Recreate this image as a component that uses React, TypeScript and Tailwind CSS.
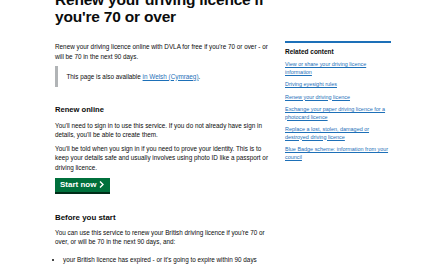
import React from "react";

const links = [
  "View or share your driving licence information",
  "Driving eyesight rules",
  "Renew your driving licence",
  "Exchange your paper driving licence for a photocard licence",
  "Replace a lost, stolen, damaged or destroyed driving licence",
  "Blue Badge scheme: information from your council",
];

export default function App() {
  return (
    <div className="h-[264px] w-[440px] overflow-hidden bg-white text-[#0b0c0c] font-['Liberation_Sans',Arial,sans-serif]">
      <div className="-mt-[9px] pl-[55px]">
        <h1 className="w-[230px] text-[15.5px] font-bold leading-[17px] tracking-[-0.2px]">
          Renew your driving licence if you're 70 or over
        </h1>
        <div className="flex gap-[14px]">
          <main className="w-[216px] text-[6.35px] leading-[9.6px]">
            <p className="mt-[17px] leading-[10px]">
              Renew your driving licence online with DVLA for free if you're 70 or over - or will be 70 in the next 90 days.
            </p>
            <div className="mt-[4px] border-l-[3.3px] border-[#b1b4b6] py-[5.5px] pl-[8.4px]">
              This page is also available{" "}
              <a href="#" className="text-[#1d70b8] underline underline-offset-1">
                in Welsh (Cymraeg)
              </a>
              .
            </div>
            <h2 className="mt-[18px] text-[7.6px] font-bold leading-[10px]">Renew online</h2>
            <p className="mt-[6px]">
              You'll need to sign in to use this service. If you do not already have sign in details, you'll be able to create them.
            </p>
            <p className="mt-[4px]">
              You'll be told when you sign in if you need to prove your identity. This is to keep your details safe and usually involves using photo ID like a passport or driving licence.
            </p>
            <button className="mt-[5px] flex h-[14px] w-[55px] items-center gap-[3px] bg-[#00703c] pl-[5px] text-[8px] font-bold text-white shadow-[0_2px_0_#002d18]">
              Start now
              <svg width="5" height="7" viewBox="0 0 5 7">
                <path d="M1 0.5 L4 3.5 L1 6.5" fill="none" stroke="white" strokeWidth="1.4" />
              </svg>
            </button>
            <h2 className="mt-[21px] text-[7.9px] font-bold leading-[10px]">Before you start</h2>
            <p className="mt-[5px]">
              You can use this service to renew your British driving licence if you're 70 or over, or will be 70 in the next 90 days, and:
            </p>
            <ul className="mt-[8px] list-disc pl-[8px]">
              <li>your British licence has expired - or it's going to expire within 90 days</li>
            </ul>
          </main>
          <aside className="mt-[16px] w-[106px]">
            <div className="border-t-2 border-[#1d70b8] pt-[5px]">
              <h2 className="text-[6.5px] font-bold leading-[8px]">Related content</h2>
              <ul className="mt-[5px] flex flex-col gap-[5px] text-[5.45px] leading-[7.5px]">
                {links.map((l) => (
                  <li key={l}>
                    <a href="#" className="text-[#1d70b8] underline underline-offset-1">
                      {l}
                    </a>
                  </li>
                ))}
              </ul>
            </div>
          </aside>
        </div>
      </div>
    </div>
  );
}
